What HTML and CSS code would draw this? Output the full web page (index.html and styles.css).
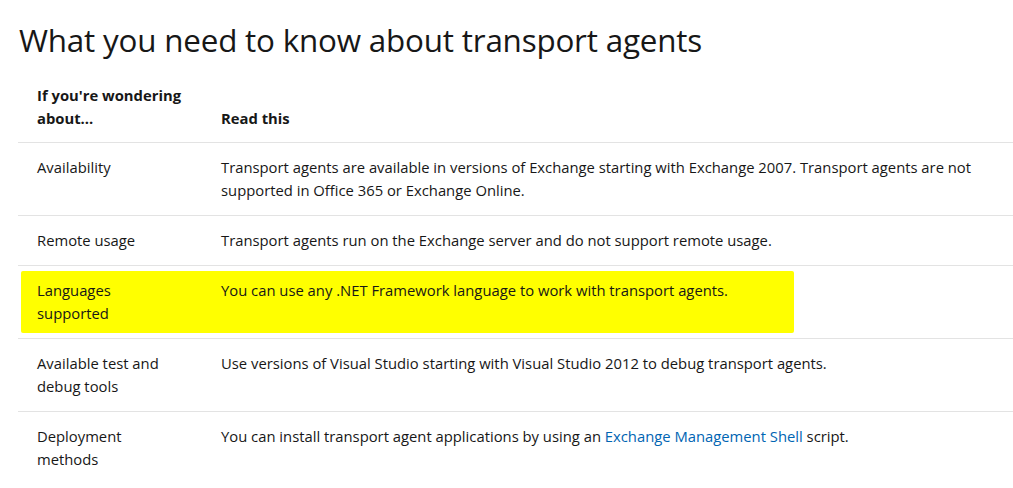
FILE: index.html
```html
<!DOCTYPE html>
<html>

<head>
    <link rel="stylesheet" href="styles.css">
</head>

<body>
    <h1 class="title">What you need to know about transport agents</h1>
    <div class="table">
        <div class="row head">
            <div class="cell">If you're wondering about...</div>
            <div class="cell">Read this</div>
        </div>
        <div class="row">
            <div class="cell">Availability</div>
            <div class="cell">Transport agents are available in versions of Exchange starting with Exchange 2007. Transport agents are not supported in Office 365 or Exchange Online.</div>
        </div>
        <div class="row">
            <div class="cell">Remote usage</div>
            <div class="cell">Transport agents run on the Exchange server and do not support remote usage.</div>
        </div>
        <div class="row marked">
            <span class="mark"></span>
            <div class="cell">Languages supported</div>
            <div class="cell">You can use any .NET Framework language to work with transport agents.</div>
        </div>
        <div class="row">
            <div class="cell">Available test and debug tools</div>
            <div class="cell">Use versions of Visual Studio starting with Visual Studio 2012 to debug transport agents.</div>
        </div>
        <div class="row last">
            <div class="cell">Deployment methods</div>
            <div class="cell">You can install transport agent applications by using an <a href="#">Exchange Management Shell</a> script.</div>
        </div>
    </div>
</body>

</html>
```

FILE: styles.css
```css
* {
    padding: 0;
    margin: 0;
    box-sizing: border-box;
}

body {
    background: #fff;
    color: #171717;
    font-family: "Open Sans", "Noto Sans", sans-serif;
    font-size: 14.8px;
    line-height: 23px;
    padding-left: 18px;
    overflow: hidden;
}

.title {
    font-size: 31.4px;
    line-height: 38px;
    font-weight: 400;
    padding-top: 21px;
    padding-left: 1px;
    margin-bottom: 12px;
    letter-spacing: -0.2px;
}

.row {
    display: grid;
    grid-template-columns: 184px 1fr;
    border-bottom: 1px solid #e3e3e3;
    position: relative;
}

.cell {
    padding: 13px 19px;
    position: relative;
}

.cell:first-of-type {
    padding-right: 30px;
}

.head .cell {
    font-weight: 700;
    align-self: end;
    padding-bottom: 12px;
}

.head .cell:first-of-type {
    padding-right: 4px;
}

.last {
    border-bottom: none;
}

.mark {
    position: absolute;
    left: 3px;
    top: 5px;
    width: 773px;
    height: 62px;
    background: #ffff00;
    border-radius: 2px;
}

a {
    color: #0065b3;
    text-decoration: none;
}
```
